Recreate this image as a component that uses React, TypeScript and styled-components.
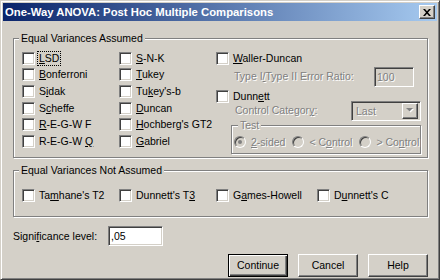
import React from 'react'
import styled, { createGlobalStyle, css } from 'styled-components'

const GlobalStyle = createGlobalStyle`
  html, body { margin: 0; padding: 0; background: #d4d0c8; }
  body {
    font-family: "Liberation Sans", Arial, sans-serif;
    font-size: 10.5px;
    color: #000;
  }
  * { box-sizing: border-box; }
`

const sunken = css`
  border: 1px solid;
  border-color: #808080 #fff #fff #808080;
  box-shadow: inset 1px 1px #404040, inset -1px -1px #d4d0c8;
`

const raised = css`
  border: 1px solid;
  border-color: #fff #404040 #404040 #fff;
  box-shadow: inset -1px -1px #808080;
  background: #d4d0c8;
`

const disabledText = css`
  color: #808080;
  text-shadow: 1px 1px #fff;
`

const Window = styled.div`
  width: 440px;
  height: 280px;
  border: 1px solid;
  border-color: #d4d0c8 #404040 #404040 #d4d0c8;
  box-shadow: inset 1px 1px #fff, inset -1px -1px #808080;
  padding: 2px;
  display: flex;
  flex-direction: column;
  overflow: hidden;
`

const TitleBar = styled.div`
  height: 18px;
  flex: none;
  display: flex;
  align-items: center;
  justify-content: space-between;
  padding: 0 2px 0 2px;
  background: linear-gradient(to right, #0a246a, #a6caf0);
`

const Title = styled.span`
  color: #fff;
  font-weight: bold;
  font-size: 11.3px;
  white-space: nowrap;
`

const CloseButton = styled.span`
  ${raised};
  width: 16px;
  height: 14px;
  display: grid;
  place-items: center;
`

const Body = styled.div`
  flex: 1;
  display: flex;
  flex-direction: column;
  padding: 11px 9px 0 10px;
`

const Group = styled.fieldset<{ $gap?: number }>`
  margin: ${p => p.$gap ?? 0}px 0 0 0;
  padding: 0;
  min-width: 0;
  border: 1px solid #808080;
  box-shadow: inset 1px 1px #fff, 1px 1px #fff;
`

const Caption = styled.legend<{ $off?: boolean }>`
  margin-left: ${p => (p.$off ? 4 : 5)}px;
  padding: 0 2px;
  line-height: 13px;
  background: #d4d0c8;
  ${p => p.$off && disabledText};
`

const Columns = styled.div`
  display: grid;
  grid-template-columns: 97px 97px 205px;
  padding: 5px 0 3px 8px;
`

const Column = styled.div`
  display: flex;
  flex-direction: column;
`

const Row = styled.div<{ $h?: number; $mt?: number; $pl?: number; $pr?: number }>`
  height: ${p => p.$h ?? 16.6}px;
  margin-top: ${p => p.$mt ?? 0}px;
  padding: 0 ${p => p.$pr ?? 0}px 0 ${p => p.$pl ?? 0}px;
  display: flex;
  align-items: center;
  justify-content: space-between;
  white-space: nowrap;
`

const CheckLine = styled.label<{ $w?: number }>`
  display: flex;
  align-items: center;
  width: ${p => (p.$w ? `${p.$w}px` : 'auto')};
  white-space: nowrap;
`

const Box = styled.span`
  ${sunken};
  width: 13px;
  height: 13px;
  flex: none;
  background: #fff;
`

const Text = styled.span<{ $focus?: boolean; $off?: boolean; $gap?: number }>`
  line-height: 13px;
  margin-left: ${p => (p.$focus ? 2 : p.$gap ?? 4)}px;
  ${p => p.$focus && css`
    border: 1px dotted #000;
    padding: 0 1px;
  `};
  ${p => p.$off && disabledText};
`

const Field = styled.div<{ $w: number; $off?: boolean }>`
  ${sunken};
  width: ${p => p.$w}px;
  height: 20px;
  flex: none;
  display: flex;
  align-items: center;
  padding: 0 2px;
  background: ${p => (p.$off ? '#d4d0c8' : '#fff')};
  ${p => p.$off && disabledText};
`

const Combo = styled.div`
  ${sunken};
  width: 70px;
  height: 20px;
  display: flex;
  align-items: center;
  padding: 2px;
  background: #d4d0c8;
`

const ComboValue = styled.span`
  flex: 1;
  padding-left: 2px;
  ${disabledText};
`

const ComboButton = styled.span`
  ${raised};
  width: 16px;
  height: 16px;
  display: grid;
  place-items: center;
`

const SubGroup = styled.fieldset`
  margin: -2.5px 0 0 15px;
  padding: 2.5px 0 3px 2px;
  min-width: 0;
  border: 1px solid #808080;
  box-shadow: inset 1px 1px #fff, 1px 1px #fff;
`

const RadioRow = styled.div`
  height: 16px;
  display: flex;
  align-items: center;
  gap: 7px;
`

const RadioItem = styled.span`
  display: flex;
  align-items: center;
  white-space: nowrap;
`

const Radio = styled.span<{ $on?: boolean }>`
  width: 12px;
  height: 12px;
  flex: none;
  border-radius: 50%;
  border: 1px solid;
  border-color: #808080 #fff #fff #808080;
  box-shadow: inset 1px 1px #404040, inset -1px -1px #d4d0c8;
  background: #d4d0c8;
  display: grid;
  place-items: center;
  &::after {
    content: '';
    width: 4px;
    height: 4px;
    border-radius: 50%;
    background: #808080;
    display: ${p => (p.$on ? 'block' : 'none')};
  }
`

const Strip = styled.div`
  display: flex;
  padding: 7px 0 7.5px 8px;
  height: 39px;
`

const SigRow = styled.div`
  margin-top: 9px;
  height: 20px;
  display: flex;
  align-items: center;
`

const SigLabel = styled.span`
  width: 95px;
  white-space: nowrap;
`

const Buttons = styled.div`
  margin-top: 8px;
  display: flex;
  justify-content: flex-end;
  gap: 10px;
`

const Button = styled.button<{ $default?: boolean }>`
  width: 60px;
  height: 23px;
  padding: 0;
  font: inherit;
  color: #000;
  background: #d4d0c8;
  ${p => (p.$default
    ? css`
        border: 1px solid #000;
        box-shadow: inset 1px 1px #fff, inset -1px -1px #404040, inset -2px -2px #808080;
      `
    : css`
        border: 1px solid;
        border-color: #fff #404040 #404040 #fff;
        box-shadow: inset -1px -1px #808080;
      `)};
`

// "&" marks the mnemonic letter, as in a Win32 resource
const Mn: React.FC<{ text: string }> = ({ text }) => {
  const i = text.indexOf('&')
  if (i < 0) return <>{text}</>
  return (
    <>
      {text.slice(0, i)}
      <u>{text[i + 1]}</u>
      {text.slice(i + 2)}
    </>
  )
}

const Check: React.FC<{ label: string; focus?: boolean; w?: number }> = ({ label, focus, w }) => (
  <CheckLine $w={w}>
    <Box />
    <Text $focus={focus}>
      <Mn text={label} />
    </Text>
  </CheckLine>
)

const Option: React.FC<{ label: string; on?: boolean }> = ({ label, on }) => (
  <RadioItem>
    <Radio $on={on} />
    <Text $off $gap={5}>
      <Mn text={label} />
    </Text>
  </RadioItem>
)

const col1 = ['&LSD', '&Bonferroni', 'S&idak', 'S&cheffe', '&R-E-G-W F', 'R-E-G-W &Q']
const col2 = ['&S-N-K', '&Tukey', "Tu&key's-b", '&Duncan', "&Hochberg's GT2", '&Gabriel']
const unequal = [
  { label: "Ta&mhane's T2", w: 97 },
  { label: "Dunnett's T&3", w: 97 },
  { label: 'G&ames-Howell', w: 101 },
  { label: "D&unnett's C" },
]

const CloseGlyph = () => (
  <svg width="8" height="7" viewBox="0 0 8 7">
    <path d="M0 0h2l2 2.2L6 0h2L5 3.5 8 7H6L4 4.8 2 7H0l3-3.5z" fill="#000" />
  </svg>
)

const ArrowGlyph = () => (
  <svg width="8" height="5" viewBox="0 0 8 5">
    <path d="M1 1h7L4.5 4.5z" fill="#fff" />
    <path d="M0 0h7L3.5 3.5z" fill="#808080" />
  </svg>
)

export default function App() {
  return (
    <>
      <GlobalStyle />
      <Window>
        <TitleBar>
          <Title>One-Way ANOVA: Post Hoc Multiple Comparisons</Title>
          <CloseButton>
            <CloseGlyph />
          </CloseButton>
        </TitleBar>
        <Body>
          <Group>
            <Caption>Equal Variances Assumed</Caption>
            <Columns>
              <Column>
                {col1.map((l, i) => (
                  <Row key={l}>
                    <Check label={l} focus={i === 0} />
                  </Row>
                ))}
              </Column>
              <Column>
                {col2.map(l => (
                  <Row key={l}>
                    <Check label={l} />
                  </Row>
                ))}
              </Column>
              <Column>
                <Row $h={16}>
                  <Check label="&Waller-Duncan" />
                </Row>
                <Row $h={21} $pl={18} $pr={7}>
                  <Text $off $gap={0}>
                    <Mn text="Type I&/Type II Error Ratio:" />
                  </Text>
                  <Field $w={40} $off>100</Field>
                </Row>
                <Row $h={16} $mt={1}>
                  <Check label="Dunn&ett" />
                </Row>
                <Row $h={21} $mt={-4} $pl={19}>
                  <Text $off $gap={0}>
                    <Mn text="Control Categor&y:" />
                  </Text>
                  <Combo>
                    <ComboValue>Last</ComboValue>
                    <ComboButton>
                      <ArrowGlyph />
                    </ComboButton>
                  </Combo>
                </Row>
                <SubGroup>
                  <Caption $off>Test</Caption>
                  <RadioRow>
                    <Option label="&2-sided" on />
                    <Option label="< C&ontrol" />
                    <Option label="> Co&ntrol" />
                  </RadioRow>
                </SubGroup>
              </Column>
            </Columns>
          </Group>

          <Group $gap={5.5}>
            <Caption>Equal Variances Not Assumed</Caption>
            <Strip>
              {unequal.map(u => (
                <Check key={u.label} label={u.label} w={u.w} />
              ))}
            </Strip>
          </Group>

          <SigRow>
            <SigLabel>
              <Mn text="Signi&ficance level:" />
            </SigLabel>
            <Field $w={55}>,05</Field>
          </SigRow>

          <Buttons>
            <Button $default>Continue</Button>
            <Button>Cancel</Button>
            <Button>Help</Button>
          </Buttons>
        </Body>
      </Window>
    </>
  )
}
